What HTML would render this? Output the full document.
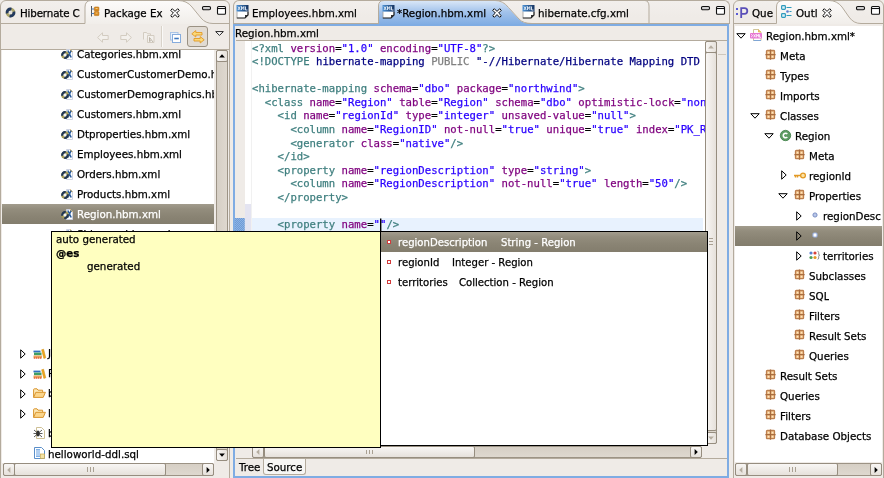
<!DOCTYPE html>
<html><head><meta charset="utf-8"><title>Eclipse</title>
<style>
html,body{margin:0;padding:0}
body{width:884px;height:478px;overflow:hidden;background:#EFEBE7;position:relative;
 font-family:"DejaVu Sans","Liberation Sans",sans-serif;font-size:10.3px;color:#000;}
.abs{position:absolute}
.ui,.code{will-change:transform;-webkit-text-stroke:.25px}
.ui{position:absolute;white-space:nowrap;line-height:14px;height:14px}
.code{position:absolute;white-space:pre;font-family:"DejaVu Sans Mono","Liberation Mono",monospace;font-size:10.63px;line-height:14px;height:14px;left:4.200px}
.t{color:#3F7F7F}.a{color:#7F007F}.v{color:#2A00FF}.k{color:#000080}.g{color:#808080}.n{color:#000080}
svg{position:absolute;overflow:visible}
.btn{position:absolute;box-sizing:border-box;border:1px solid #968D7F;border-radius:2px;background:linear-gradient(#F8F6F4,#E6E1DB)}
.vbtn{position:absolute;box-sizing:border-box;border:1px solid #968D7F;border-radius:2px;background:linear-gradient(90deg,#F8F6F4,#E6E1DB)}
.trough{position:absolute;box-sizing:border-box;border:1px solid #9C9385;background:linear-gradient(90deg,#D6CFC5,#DED8CF);border-radius:2px}
</style></head>
<body>
<div class="abs" style="left:0px;top:0px;width:230px;height:482px;border:1px solid #B4AB9D;border-radius:6px 6px 0 0;box-sizing:border-box;background:linear-gradient(#F2EFEC,#EFEBE7 16px)"></div>
<svg style="left:0px;top:0px" width="230" height="24" viewBox="0 0 230 24"><defs><linearGradient id="at" x1="0" y1="0" x2="0" y2="1"><stop offset="0" stop-color="#FCFBFA"/><stop offset="1" stop-color="#F1EEEA"/></linearGradient></defs><path d="M85 24V7Q85 .5 91.500 .5H178Q187 .5 192 7L201 18Q205.500 23.500 213 23.500H229V24z" fill="url(#at)"/><path d="M85 23.500V7Q85 .5 91.500 .5H178Q187 .5 192 7L201 18Q205.500 23.500 213 23.500H229" fill="none" stroke="#B4AB9D"/><path d="M1 23.500H85" stroke="#B4AB9D"/></svg>
<svg style="left:5px;top:7px" width="11" height="11" viewBox="0 0 11 11"><circle cx="5.500" cy="5.500" r="3.500" fill="#E4E2DC" stroke="#A9A368" stroke-width="2.600"/><path d="M2.12 6.41A3.5 3.5 0 0 1 6.41 2.12M8.88 4.59A3.5 3.5 0 0 1 4.59 8.88" fill="none" stroke="#22395F" stroke-width="2.800"/></svg>
<div class="ui" style="left:20px;top:6px;letter-spacing:-.15px">Hibernate C</div>
<svg style="left:91px;top:6px" width="10" height="11" viewBox="0 0 10 11"><path d="M.5 0v10.500" stroke="#555" stroke-width="1"/><path d="M.5 3h3M.5 7.500h3" stroke="#4A7CC0" stroke-width="1"/><rect x="3.300" y="1" width="4.600" height="4" rx=".7" fill="#D98A1E" stroke="#B86E10" stroke-width=".6"/><rect x="3.300" y="5.600" width="4.600" height="4" rx=".7" fill="#D98A1E" stroke="#B86E10" stroke-width=".6"/><path d="M4.600 2.500h2M4.600 7.100h2" stroke="#F3C77C" stroke-width="1"/></svg>
<div class="ui" style="left:104px;top:6px;">Package Ex</div>
<svg style="left:170px;top:8px" width="10" height="10" viewBox="0 0 10 10"><path d="M.7 2.300L2.300 .7 5 3.400 7.700 .7 9.300 2.300 6.600 5 9.300 7.700 7.700 9.300 5 6.600 2.300 9.300 .7 7.700 3.400 5z" fill="#fff" stroke="#000" stroke-width=".95" stroke-linejoin="miter"/></svg>
<svg style="left:202px;top:6px" width="9" height="4" viewBox="0 0 9 4"><rect x=".5" y=".5" width="8" height="3.200" rx="1.200" fill="#CFCFCF" stroke="#111" stroke-width="1.100"/></svg>
<svg style="left:217px;top:6px" width="9" height="9" viewBox="0 0 9 9"><rect x=".5" y=".5" width="8" height="7.800" rx="1" fill="#fff" stroke="#111" stroke-width="1.100"/><path d="M.5 2.500h8" stroke="#111" stroke-width="1.100"/></svg>
<svg style="left:97px;top:32px" width="12" height="11" viewBox="0 0 12 11"><path d="M.6 5.500L5.500 .8V3.500H11.200V7.500H5.500V10.200z" fill="#F3F0EC" stroke="#D3CCC1" stroke-width="1" stroke-linejoin="round"/></svg>
<svg style="left:120px;top:32px" width="12" height="11" viewBox="0 0 12 11"><path transform="translate(12 0) scale(-1 1)" d="M.6 5.500L5.500 .8V3.500H11.200V7.500H5.500V10.200z" fill="#F3F0EC" stroke="#D3CCC1" stroke-width="1" stroke-linejoin="round"/></svg>
<svg style="left:143px;top:31px" width="12" height="12" viewBox="0 0 12 12"><path d="M.5 8.500V1.500h3l1 1.300h3v2" fill="#F3F0EC" stroke="#D3CCC1"/><path d="M4.500 4.500h6.500v7H4.500z" fill="#F3F0EC" stroke="#D3CCC1"/><path d="M6.500 6.500l3.500 4.500M6.500 6.500v4l1.500-1" fill="none" stroke="#BDB5A9" stroke-width="1"/></svg>
<div class="abs" style="left:160.5px;top:26px;width:1px;height:21px;background:#D9D3CA"></div>
<div class="abs" style="left:161.5px;top:26px;width:1px;height:21px;background:#FAF9F7"></div>
<svg style="left:170px;top:32px" width="11" height="11" viewBox="0 0 11 11"><rect x=".5" y=".5" width="7.500" height="7.500" fill="#E8F0FA" stroke="#A9C4E6"/><rect x="2.500" y="2.500" width="8" height="8" fill="#fff" stroke="#86ACDD"/><path d="M4.300 6.500h4.500" stroke="#3E78C0" stroke-width="1.600"/></svg>
<div class="abs" style="left:187px;top:26px;width:21px;height:21px;box-sizing:border-box;border:1px solid #9A9183;border-radius:3px;background:#E1DBD3"></div>
<svg style="left:191px;top:30px" width="14" height="14" viewBox="0 0 14 14"><path d="M.8 3.800L4.800 .6V2.500H11V5H4.800V7z" fill="#FBD978" stroke="#E39A25" stroke-width=".9" stroke-linejoin="round"/><path d="M13.200 9.800L9.200 6.600V8.500H3V11H9.200V13z" fill="#FBD978" stroke="#E39A25" stroke-width=".9" stroke-linejoin="round"/></svg>
<svg style="left:215px;top:31px" width="9" height="5" viewBox="0 0 9 5"><path d="M.7 .6H8.300L4.500 4.400z" fill="#fff" stroke="#222" stroke-width="1" stroke-linejoin="round"/></svg>
<div class="abs" style="left:1px;top:48.5px;width:228px;height:1px;background:#B4AB9D"></div>
<div class="abs" style="left:2px;top:49.5px;width:212px;height:413px;background:#fff"></div>
<div class="ui" style="left:77px;top:47px;max-width:137px;overflow:hidden">Categories.hbm.xml</div>
<svg style="left:61px;top:49px" width="12" height="11" viewBox="0 0 12 11"><path d="M5.500 .5h4l2 2v8h-6z" fill="#fff" stroke="#C9CFE0" stroke-width=".9"/><path d="M9.500 .5v2h2" fill="#F6D27A" stroke="#E0A93B" stroke-width=".8"/><path d="M6.800 1.500l3.400 7M10.200 1.500l-3.400 7" stroke="#2C5E9E" stroke-width="1.600"/><circle cx="4" cy="6" r="2.800" fill="#F4F3EF" stroke="#A39A55" stroke-width="2"/><path d="M1.30 6.72A2.8 2.8 0 0 1 4.72 3.30M6.70 5.28A2.8 2.8 0 0 1 3.28 8.70" fill="none" stroke="#1F3557" stroke-width="2.200"/></svg>
<div class="ui" style="left:77px;top:67px;max-width:137px;overflow:hidden">CustomerCustomerDemo.hbm.xml</div>
<svg style="left:61px;top:69px" width="12" height="11" viewBox="0 0 12 11"><path d="M5.500 .5h4l2 2v8h-6z" fill="#fff" stroke="#C9CFE0" stroke-width=".9"/><path d="M9.500 .5v2h2" fill="#F6D27A" stroke="#E0A93B" stroke-width=".8"/><path d="M6.800 1.500l3.400 7M10.200 1.500l-3.400 7" stroke="#2C5E9E" stroke-width="1.600"/><circle cx="4" cy="6" r="2.800" fill="#F4F3EF" stroke="#A39A55" stroke-width="2"/><path d="M1.30 6.72A2.8 2.8 0 0 1 4.72 3.30M6.70 5.28A2.8 2.8 0 0 1 3.28 8.70" fill="none" stroke="#1F3557" stroke-width="2.200"/></svg>
<div class="ui" style="left:77px;top:87px;max-width:137px;overflow:hidden">CustomerDemographics.hbm.xml</div>
<svg style="left:61px;top:89px" width="12" height="11" viewBox="0 0 12 11"><path d="M5.500 .5h4l2 2v8h-6z" fill="#fff" stroke="#C9CFE0" stroke-width=".9"/><path d="M9.500 .5v2h2" fill="#F6D27A" stroke="#E0A93B" stroke-width=".8"/><path d="M6.800 1.500l3.400 7M10.200 1.500l-3.400 7" stroke="#2C5E9E" stroke-width="1.600"/><circle cx="4" cy="6" r="2.800" fill="#F4F3EF" stroke="#A39A55" stroke-width="2"/><path d="M1.30 6.72A2.8 2.8 0 0 1 4.72 3.30M6.70 5.28A2.8 2.8 0 0 1 3.28 8.70" fill="none" stroke="#1F3557" stroke-width="2.200"/></svg>
<div class="ui" style="left:77px;top:107px;max-width:137px;overflow:hidden">Customers.hbm.xml</div>
<svg style="left:61px;top:109px" width="12" height="11" viewBox="0 0 12 11"><path d="M5.500 .5h4l2 2v8h-6z" fill="#fff" stroke="#C9CFE0" stroke-width=".9"/><path d="M9.500 .5v2h2" fill="#F6D27A" stroke="#E0A93B" stroke-width=".8"/><path d="M6.800 1.500l3.400 7M10.200 1.500l-3.400 7" stroke="#2C5E9E" stroke-width="1.600"/><circle cx="4" cy="6" r="2.800" fill="#F4F3EF" stroke="#A39A55" stroke-width="2"/><path d="M1.30 6.72A2.8 2.8 0 0 1 4.72 3.30M6.70 5.28A2.8 2.8 0 0 1 3.28 8.70" fill="none" stroke="#1F3557" stroke-width="2.200"/></svg>
<div class="ui" style="left:77px;top:127px;max-width:137px;overflow:hidden">Dtproperties.hbm.xml</div>
<svg style="left:61px;top:129px" width="12" height="11" viewBox="0 0 12 11"><path d="M5.500 .5h4l2 2v8h-6z" fill="#fff" stroke="#C9CFE0" stroke-width=".9"/><path d="M9.500 .5v2h2" fill="#F6D27A" stroke="#E0A93B" stroke-width=".8"/><path d="M6.800 1.500l3.400 7M10.200 1.500l-3.400 7" stroke="#2C5E9E" stroke-width="1.600"/><circle cx="4" cy="6" r="2.800" fill="#F4F3EF" stroke="#A39A55" stroke-width="2"/><path d="M1.30 6.72A2.8 2.8 0 0 1 4.72 3.30M6.70 5.28A2.8 2.8 0 0 1 3.28 8.70" fill="none" stroke="#1F3557" stroke-width="2.200"/></svg>
<div class="ui" style="left:77px;top:147px;max-width:137px;overflow:hidden">Employees.hbm.xml</div>
<svg style="left:61px;top:149px" width="12" height="11" viewBox="0 0 12 11"><path d="M5.500 .5h4l2 2v8h-6z" fill="#fff" stroke="#C9CFE0" stroke-width=".9"/><path d="M9.500 .5v2h2" fill="#F6D27A" stroke="#E0A93B" stroke-width=".8"/><path d="M6.800 1.500l3.400 7M10.200 1.500l-3.400 7" stroke="#2C5E9E" stroke-width="1.600"/><circle cx="4" cy="6" r="2.800" fill="#F4F3EF" stroke="#A39A55" stroke-width="2"/><path d="M1.30 6.72A2.8 2.8 0 0 1 4.72 3.30M6.70 5.28A2.8 2.8 0 0 1 3.28 8.70" fill="none" stroke="#1F3557" stroke-width="2.200"/></svg>
<div class="ui" style="left:77px;top:167px;max-width:137px;overflow:hidden">Orders.hbm.xml</div>
<svg style="left:61px;top:169px" width="12" height="11" viewBox="0 0 12 11"><path d="M5.500 .5h4l2 2v8h-6z" fill="#fff" stroke="#C9CFE0" stroke-width=".9"/><path d="M9.500 .5v2h2" fill="#F6D27A" stroke="#E0A93B" stroke-width=".8"/><path d="M6.800 1.500l3.400 7M10.200 1.500l-3.400 7" stroke="#2C5E9E" stroke-width="1.600"/><circle cx="4" cy="6" r="2.800" fill="#F4F3EF" stroke="#A39A55" stroke-width="2"/><path d="M1.30 6.72A2.8 2.8 0 0 1 4.72 3.30M6.70 5.28A2.8 2.8 0 0 1 3.28 8.70" fill="none" stroke="#1F3557" stroke-width="2.200"/></svg>
<div class="ui" style="left:77px;top:187px;max-width:137px;overflow:hidden">Products.hbm.xml</div>
<svg style="left:61px;top:189px" width="12" height="11" viewBox="0 0 12 11"><path d="M5.500 .5h4l2 2v8h-6z" fill="#fff" stroke="#C9CFE0" stroke-width=".9"/><path d="M9.500 .5v2h2" fill="#F6D27A" stroke="#E0A93B" stroke-width=".8"/><path d="M6.800 1.500l3.400 7M10.200 1.500l-3.400 7" stroke="#2C5E9E" stroke-width="1.600"/><circle cx="4" cy="6" r="2.800" fill="#F4F3EF" stroke="#A39A55" stroke-width="2"/><path d="M1.30 6.72A2.8 2.8 0 0 1 4.72 3.30M6.70 5.28A2.8 2.8 0 0 1 3.28 8.70" fill="none" stroke="#1F3557" stroke-width="2.200"/></svg>
<div class="abs" style="left:2px;top:204px;width:212px;height:20px;background:linear-gradient(#A29C8D,#938D7D 25%,#8A8474 60%,#837D6D)"></div>
<div class="ui" style="left:77px;top:207px;color:#fff">Region.hbm.xml</div>
<svg style="left:61px;top:209px" width="12" height="11" viewBox="0 0 12 11"><path d="M5.500 .5h4l2 2v8h-6z" fill="#fff" stroke="#C9CFE0" stroke-width=".9"/><path d="M9.500 .5v2h2" fill="#F6D27A" stroke="#E0A93B" stroke-width=".8"/><path d="M6.800 1.500l3.400 7M10.200 1.500l-3.400 7" stroke="#2C5E9E" stroke-width="1.600"/><circle cx="4" cy="6" r="2.800" fill="#F4F3EF" stroke="#A39A55" stroke-width="2"/><path d="M1.30 6.72A2.8 2.8 0 0 1 4.72 3.30M6.70 5.28A2.8 2.8 0 0 1 3.28 8.70" fill="none" stroke="#1F3557" stroke-width="2.200"/></svg>
<svg style="left:61px;top:229px" width="12" height="11" viewBox="0 0 12 11"><path d="M5.500 .5h4l2 2v8h-6z" fill="#fff" stroke="#C9CFE0" stroke-width=".9"/><path d="M9.500 .5v2h2" fill="#F6D27A" stroke="#E0A93B" stroke-width=".8"/><path d="M6.800 1.500l3.400 7M10.200 1.500l-3.400 7" stroke="#2C5E9E" stroke-width="1.600"/><circle cx="4" cy="6" r="2.800" fill="#F4F3EF" stroke="#A39A55" stroke-width="2"/><path d="M1.30 6.72A2.8 2.8 0 0 1 4.72 3.30M6.70 5.28A2.8 2.8 0 0 1 3.28 8.70" fill="none" stroke="#1F3557" stroke-width="2.200"/></svg>
<div class="ui" style="left:77px;top:227px;">Shippers.hbm.xml</div>
<svg style="left:20px;top:348.5px" width="6" height="10" viewBox="0 0 6 10"><path d="M.7 .8L5.200 5 .7 9.200z" fill="#fff" stroke="#000" stroke-width="1" stroke-linejoin="round"/></svg>
<svg style="left:20px;top:368.5px" width="6" height="10" viewBox="0 0 6 10"><path d="M.7 .8L5.200 5 .7 9.200z" fill="#fff" stroke="#000" stroke-width="1" stroke-linejoin="round"/></svg>
<svg style="left:20px;top:388.5px" width="6" height="10" viewBox="0 0 6 10"><path d="M.7 .8L5.200 5 .7 9.200z" fill="#fff" stroke="#000" stroke-width="1" stroke-linejoin="round"/></svg>
<svg style="left:20px;top:408.5px" width="6" height="10" viewBox="0 0 6 10"><path d="M.7 .8L5.200 5 .7 9.200z" fill="#fff" stroke="#000" stroke-width="1" stroke-linejoin="round"/></svg>
<svg style="left:33px;top:349px" width="13" height="10" viewBox="0 0 13 10"><rect x=".5" y="1.600" width="7" height="1.800" fill="#2F6FC2"/><rect x="1" y="3.600" width="7.500" height="2.600" fill="#3F9E63"/><rect x=".5" y="6.500" width="8.500" height="3" fill="#E9A25B"/><path d="M1 9h7.500" stroke="#D33" stroke-width="1" stroke-dasharray="1 1"/><path d="M8.600 .8l2-.6 2.200 8.600-2 .6z" fill="#EDA61E" stroke="#D18E10" stroke-width=".5"/></svg>
<svg style="left:33px;top:369px" width="13" height="10" viewBox="0 0 13 10"><rect x=".5" y="1.600" width="7" height="1.800" fill="#2F6FC2"/><rect x="1" y="3.600" width="7.500" height="2.600" fill="#3F9E63"/><rect x=".5" y="6.500" width="8.500" height="3" fill="#E9A25B"/><path d="M1 9h7.500" stroke="#D33" stroke-width="1" stroke-dasharray="1 1"/><path d="M8.600 .8l2-.6 2.200 8.600-2 .6z" fill="#EDA61E" stroke="#D18E10" stroke-width=".5"/></svg>
<svg style="left:33px;top:388px" width="13" height="10" viewBox="0 0 13 10"><path d="M.6 9.400V1.600Q.6 .8 1.400 .8H4l1 1.400h4.600v2" fill="#FCE9B8" stroke="#D9942E" stroke-width="1"/><path d="M.6 9.400L2.800 4.300h9.600L10.200 9.400z" fill="#FBD58A" stroke="#D9942E" stroke-width="1" stroke-linejoin="round"/></svg>
<svg style="left:33px;top:408px" width="13" height="10" viewBox="0 0 13 10"><path d="M.6 9.400V1.600Q.6 .8 1.400 .8H4l1 1.400h4.600v2" fill="#FCE9B8" stroke="#D9942E" stroke-width="1"/><path d="M.6 9.400L2.800 4.300h9.600L10.200 9.400z" fill="#FBD58A" stroke="#D9942E" stroke-width="1" stroke-linejoin="round"/></svg>
<svg style="left:33px;top:427px" width="12" height="12" viewBox="0 0 12 12"><path d="M3.500 .5h5l3 3v8h-8z" fill="#fff" stroke="#C8B98A" stroke-width=".9"/><ellipse cx="5" cy="6.500" rx="1.600" ry="3" fill="#333"/><path d="M1 3l8 7M9 3L1 10M.5 6.500h9" stroke="#333" stroke-width=".8"/></svg>
<svg style="left:34px;top:447px" width="11" height="12" viewBox="0 0 11 12"><path d="M.5 .5h7l3 3v8h-10z" fill="#fff" stroke="#5B8FC9" stroke-width="1"/><rect x="2" y="2" width="4" height="8" fill="#7FB0E6"/><path d="M2 4h4M2 6h4M2 8h4" stroke="#fff" stroke-width=".8"/><rect x="6.500" y="7" width="4" height="4.500" fill="#F4E3A3" stroke="#C8A64B" stroke-width=".7"/></svg>
<div class="ui" style="left:48px;top:346px;">J</div>
<div class="ui" style="left:48px;top:366px;">R</div>
<div class="ui" style="left:48px;top:386px;">b</div>
<div class="ui" style="left:48px;top:406px;">l</div>
<div class="ui" style="left:48px;top:426px;">b</div>
<div class="ui" style="left:48px;top:447px;">helloworld-ddl.sql</div>
<div class="trough" style="left:216px;top:50px;width:12px;height:411px"></div>
<div class="vbtn" style="left:216px;top:50px;width:12px;height:12px"></div>
<div class="vbtn" style="left:216px;top:449px;width:12px;height:12px"></div>
<svg style="left:222.0px;top:56px" width="1" height="1"><path d="M0 -1.800L-2.900 1.400H2.900z" fill="#000"/></svg>
<svg style="left:222.0px;top:455px" width="1" height="1"><path d="M0 1.800L-2.900 -1.400H2.900z" fill="#000"/></svg>
<div class="trough" style="left:3px;top:463px;width:211px;height:13px;background:linear-gradient(#D6CFC5,#DED8CF)"></div>
<div class="btn" style="left:3px;top:463px;width:12px;height:13px"></div>
<div class="btn" style="left:202px;top:463px;width:12px;height:13px"></div>
<div class="btn" style="left:14px;top:463px;width:152px;height:13px"></div>
<svg style="left:9px;top:469.5px" width="1" height="1"><path d="M-1.800 0L1.400 -2.900V2.900z" fill="#B5ADA0"/></svg>
<svg style="left:208px;top:469.5px" width="1" height="1"><path d="M1.800 0L-1.400 -2.900V2.900z" fill="#000"/></svg>
<svg style="left:87px;top:467px" width="7" height="5" viewBox="0 0 7 5"><path d="M.5 0v5M3.500 0v5M6.500 0v5" stroke="#A9A092" stroke-width="1"/></svg>
<div class="abs" style="left:233px;top:0px;width:497px;height:24px;border:1px solid #B4AB9D;border-bottom:none;border-radius:6px 6px 0 0;box-sizing:border-box;background:linear-gradient(#F2EFEC,#EFEBE7 16px)"></div>
<div class="abs" style="left:234px;top:23px;width:496px;height:1px;background:#B4AB9D"></div>
<svg style="left:233px;top:0px" width="498" height="26" viewBox="0 0 498 26"><defs><linearGradient id="tg" x1="0" y1="0" x2="0" y2="1"><stop offset="0" stop-color="#D8E6F7"/><stop offset=".45" stop-color="#A3C3EB"/><stop offset="1" stop-color="#7FACE3"/></linearGradient></defs><path d="M146 25V6Q146 1 151 1H262Q270 1 275 7.500L285.500 19Q290 24 299 24L299 25z" fill="url(#tg)"/><path d="M145.500 23.500V6Q145.500 .5 151 .5H262Q270 .5 275.500 7.500L286 19Q290 23.500 299 23.500" fill="none" stroke="#B4AB9D"/><path d="M412 .5Q416 1 416 6V23" fill="none" stroke="#B4AB9D"/></svg>
<div class="abs" style="left:233.4px;top:24px;width:1.8px;height:453.6px;background:#7FACE3"></div>
<div class="abs" style="left:727.2px;top:24px;width:2px;height:453.6px;background:#7FACE3"></div>
<div class="abs" style="left:233.4px;top:24px;width:495.8px;height:1.8px;background:#7FACE3"></div>
<div class="abs" style="left:233.4px;top:476.2px;width:495.8px;height:1.4px;background:#7FACE3"></div>
<svg style="left:236px;top:5px" width="13" height="14" viewBox="0 0 13 14"><defs><linearGradient id="xg236" x1="0" y1="0" x2="1" y2="0"><stop offset="0" stop-color="#4D93D6"/><stop offset="1" stop-color="#16335F"/></linearGradient></defs><path d="M1 6.500h11v3.500l-3 3h-8z" fill="#fff"/><path d="M1 6.500v6.300" stroke="#9A9A9A" stroke-width=".8"/><path d="M.8 13h8.200l3-3V6.500" fill="none" stroke="#111" stroke-width="1.200"/><path d="M9 13v-3h3z" fill="#333"/><rect x=".5" y="0" width="12" height="6.500" fill="url(#xg236)"/><path d="M2 1.500l2.200 3.500M4.200 1.500L2 5M5.500 5V1.500l1.200 2 1.200-2V5M9.500 1.500V5h2" stroke="#E6EEF8" stroke-width=".9" fill="none"/></svg>
<div class="ui" style="left:252px;top:6px;">Employees.hbm.xml</div>
<svg style="left:382px;top:5px" width="13" height="14" viewBox="0 0 13 14"><defs><linearGradient id="xg382" x1="0" y1="0" x2="1" y2="0"><stop offset="0" stop-color="#4D93D6"/><stop offset="1" stop-color="#16335F"/></linearGradient></defs><path d="M1 6.500h11v3.500l-3 3h-8z" fill="#fff"/><path d="M1 6.500v6.300" stroke="#9A9A9A" stroke-width=".8"/><path d="M.8 13h8.200l3-3V6.500" fill="none" stroke="#111" stroke-width="1.200"/><path d="M9 13v-3h3z" fill="#333"/><rect x=".5" y="0" width="12" height="6.500" fill="url(#xg382)"/><path d="M2 1.500l2.200 3.500M4.200 1.500L2 5M5.500 5V1.500l1.200 2 1.200-2V5M9.500 1.500V5h2" stroke="#E6EEF8" stroke-width=".9" fill="none"/></svg>
<div class="ui" style="left:397px;top:6px;">*Region.hbm.xml</div>
<svg style="left:492px;top:8px" width="10" height="10" viewBox="0 0 10 10"><path d="M.7 2.300L2.300 .7 5 3.400 7.700 .7 9.300 2.300 6.600 5 9.300 7.700 7.700 9.300 5 6.600 2.300 9.300 .7 7.700 3.400 5z" fill="#fff" stroke="#000" stroke-width=".95" stroke-linejoin="miter"/></svg>
<svg style="left:522px;top:5px" width="13" height="14" viewBox="0 0 13 14"><defs><linearGradient id="xg522" x1="0" y1="0" x2="1" y2="0"><stop offset="0" stop-color="#4D93D6"/><stop offset="1" stop-color="#16335F"/></linearGradient></defs><path d="M1 6.500h11v3.500l-3 3h-8z" fill="#fff"/><path d="M1 6.500v6.300" stroke="#9A9A9A" stroke-width=".8"/><path d="M.8 13h8.200l3-3V6.500" fill="none" stroke="#111" stroke-width="1.200"/><path d="M9 13v-3h3z" fill="#333"/><rect x=".5" y="0" width="12" height="6.500" fill="url(#xg522)"/><path d="M2 1.500l2.200 3.500M4.200 1.500L2 5M5.500 5V1.500l1.200 2 1.200-2V5M9.500 1.500V5h2" stroke="#E6EEF8" stroke-width=".9" fill="none"/></svg>
<div class="ui" style="left:538px;top:6px;">hibernate.cfg.xml</div>
<svg style="left:701px;top:6px" width="9" height="4" viewBox="0 0 9 4"><rect x=".5" y=".5" width="8" height="3.200" rx="1.200" fill="#CFCFCF" stroke="#111" stroke-width="1.100"/></svg>
<svg style="left:716px;top:6px" width="9" height="9" viewBox="0 0 9 9"><rect x=".5" y=".5" width="8" height="7.800" rx="1" fill="#fff" stroke="#111" stroke-width="1.100"/><path d="M.5 2.500h8" stroke="#111" stroke-width="1.100"/></svg>
<div class="ui" style="left:234.5px;top:25.5px;">Region.hbm.xml</div>
<div class="abs" style="left:236px;top:40px;width:491px;height:1px;background:#B4AB9D"></div>
<div class="abs" style="left:245px;top:41px;width:460px;height:405px;background:#fff"></div>
<div class="abs" style="left:245px;top:204px;width:6px;height:27px;background:#E4E4F1"></div>
<div class="abs" style="left:251px;top:41px;width:1px;height:405px;background:#F1F1F1"></div>
<svg style="left:235.2px;top:218px" width="9.8" height="13" viewBox="0 0 9.8 13"><defs><pattern id="dz" width="2" height="2" patternUnits="userSpaceOnUse"><rect width="2" height="2" fill="#8DB3E4"/><rect width="1" height="1" fill="#6F9BD6"/><rect x="1" y="1" width="1" height="1" fill="#6F9BD6"/></pattern></defs><rect width="9.800" height="13" fill="url(#dz)"/></svg>
<div class="abs" style="left:248px;top:41px;width:457px;height:405px;overflow:hidden">
<div class="abs" style="left:4px;top:176.84px;width:450.500px;height:13.500px;background:#E8F2FE"></div>
<div class="code" style="top:0.50px"><span class="t">&lt;?xml</span> <span class="a">version</span>=<span class="v">"1.0"</span> <span class="a">encoding</span>=<span class="v">"UTF-8"</span><span class="t">?&gt;</span></div>
<div class="code" style="top:14.08px"><span class="t">&lt;!DOCTYPE</span> <span class="k">hibernate-mapping</span> <span class="g">PUBLIC</span> <span class="n">"-//Hibernate/Hibernate Mapping DTD </span></div>
<div class="code" style="top:41.24px"><span class="t">&lt;hibernate-mapping</span> <span class="a">schema</span>=<span class="v">"dbo"</span> <span class="a">package</span>=<span class="v">"northwind"</span><span class="t">&gt;</span></div>
<div class="code" style="top:54.82px">  <span class="t">&lt;class</span> <span class="a">name</span>=<span class="v">"Region"</span> <span class="a">table</span>=<span class="v">"Region"</span> <span class="a">schema</span>=<span class="v">"dbo"</span> <span class="a">optimistic-lock</span>=<span class="v">"none"</span></div>
<div class="code" style="top:68.40px">    <span class="t">&lt;id</span> <span class="a">name</span>=<span class="v">"regionId"</span> <span class="a">type</span>=<span class="v">"integer"</span> <span class="a">unsaved-value</span>=<span class="v">"null"</span><span class="t">&gt;</span></div>
<div class="code" style="top:81.98px">      <span class="t">&lt;column</span> <span class="a">name</span>=<span class="v">"RegionID"</span> <span class="a">not-null</span>=<span class="v">"true"</span> <span class="a">unique</span>=<span class="v">"true"</span> <span class="a">index</span>=<span class="v">"PK_Region"</span></div>
<div class="code" style="top:95.56px">      <span class="t">&lt;generator</span> <span class="a">class</span>=<span class="v">"native"</span><span class="t">/&gt;</span></div>
<div class="code" style="top:109.14px">    <span class="t">&lt;/id&gt;</span></div>
<div class="code" style="top:122.72px">    <span class="t">&lt;property</span> <span class="a">name</span>=<span class="v">"regionDescription"</span> <span class="a">type</span>=<span class="v">"string"</span><span class="t">&gt;</span></div>
<div class="code" style="top:136.30px">      <span class="t">&lt;column</span> <span class="a">name</span>=<span class="v">"RegionDescription"</span> <span class="a">not-null</span>=<span class="v">"true"</span> <span class="a">length</span>=<span class="v">"50"</span><span class="t">/&gt;</span></div>
<div class="code" style="top:149.88px">    <span class="t">&lt;/property&gt;</span></div>
<div class="code" style="top:177.04px">    <span class="t">&lt;property</span> <span class="a">name</span>=<span class="v">""</span><span class="t">/&gt;</span></div>
</div>
<svg style="left:380px;top:218px" width="2" height="13" viewBox="0 0 2 13"><rect x="0" y=".5" width="1.400" height="12.500" fill="#000"/></svg>
<div class="trough" style="left:705px;top:41px;width:12px;height:403px"></div>
<div class="vbtn" style="left:705px;top:41px;width:12px;height:12px"></div>
<div class="vbtn" style="left:705px;top:432px;width:12px;height:12px"></div>
<svg style="left:711.0px;top:47px" width="1" height="1"><path d="M0 -1.800L-2.900 1.400H2.900z" fill="#B5ADA0"/></svg>
<svg style="left:711.0px;top:438px" width="1" height="1"><path d="M0 1.800L-2.900 -1.400H2.900z" fill="#B5ADA0"/></svg>
<div class="vbtn" style="left:705px;top:52px;width:12px;height:379px"></div>
<svg style="left:709px;top:238px" width="4" height="7" viewBox="0 0 4 7"><path d="M0 .5h4M0 3.500h4M0 6.500h4" stroke="#A9A092" stroke-width="1"/></svg>
<div class="abs" style="left:718px;top:54px;width:8px;height:1px;background:#CFC8BD"></div>
<div class="trough" style="left:252px;top:446px;width:450px;height:12px;background:linear-gradient(#D6CFC5,#DED8CF)"></div>
<div class="btn" style="left:252px;top:446px;width:12px;height:12px"></div>
<div class="btn" style="left:690px;top:446px;width:12px;height:12px"></div>
<div class="btn" style="left:264px;top:446px;width:211px;height:12px"></div>
<svg style="left:258px;top:452.0px" width="1" height="1"><path d="M-1.800 0L1.400 -2.900V2.900z" fill="#B5ADA0"/></svg>
<svg style="left:696px;top:452.0px" width="1" height="1"><path d="M1.800 0L-1.400 -2.900V2.900z" fill="#000"/></svg>
<svg style="left:366px;top:450px" width="7" height="4" viewBox="0 0 7 4"><path d="M.5 0v4M3.500 0v4M6.500 0v4" stroke="#A9A092" stroke-width="1"/></svg>
<div class="abs" style="left:236px;top:458px;width:491px;height:1px;background:#B4AB9D"></div>
<div class="abs" style="left:263px;top:459px;width:43px;height:16px;background:#F7F6F4;border:1px solid #B4AB9D;border-top:none;border-radius:0 0 3px 3px;box-sizing:border-box"></div>
<div class="ui" style="left:239px;top:459.5px;">Tree</div>
<div class="ui" style="left:266.5px;top:459.5px;">Source</div>
<div class="abs" style="left:732.5px;top:0px;width:151.5px;height:482px;border:1px solid #B4AB9D;border-radius:6px 6px 0 0;box-sizing:border-box;background:linear-gradient(#F2EFEC,#EFEBE7 16px)"></div>
<svg style="left:733px;top:0px" width="151" height="24" viewBox="0 0 151 24"><path d="M43.500 24V7Q43.500 .5 50 .5H96Q104 .5 109 7L116 17Q120.500 23.500 128 23.500H151V24z" fill="url(#at)"/><path d="M43.500 23.500V7Q43.500 .5 50 .5H96Q104 .5 109 7L116 17Q120.500 23.500 128 23.500H151" fill="none" stroke="#B4AB9D"/><path d="M1 23.500H43.500" stroke="#B4AB9D"/></svg>
<div class="abs" style="left:735px;top:26px;width:147px;height:436px;background:#fff"></div>
<svg style="left:736px;top:7px" width="12" height="11" viewBox="0 0 12 11"><rect x="0" y="1" width="2" height="2" fill="#5A5CD6"/><rect x="0" y="6" width="2" height="2" fill="#5A5CD6"/><path d="M5.200 11V1.200h3.300a2.700 2.700 0 0 1 0 5.600H5.200" fill="none" stroke="#5A4FB8" stroke-width="1.800"/></svg>
<div class="ui" style="left:752px;top:6px;">Que</div>
<svg style="left:781px;top:5px" width="11" height="13" viewBox="0 0 11 13"><rect x=".6" y=".6" width="3.800" height="3.800" rx=".8" fill="#DDF0F7" stroke="#2E9BBD" stroke-width="1.200"/><rect x=".6" y="8.600" width="3.800" height="3.800" rx=".8" fill="#DDF0F7" stroke="#2E9BBD" stroke-width="1.200"/><path d="M5.500 2.500h5M5.500 10.500h5M8.500 6.500h2" stroke="#2E9BBD" stroke-width="1.200"/><circle cx="6.500" cy="6.500" r="1.300" fill="#5B7FD0"/></svg>
<div class="ui" style="left:796px;top:6px;">Outl</div>
<svg style="left:822px;top:8px" width="10" height="10" viewBox="0 0 10 10"><path d="M.7 2.300L2.300 .7 5 3.400 7.700 .7 9.300 2.300 6.600 5 9.300 7.700 7.700 9.300 5 6.600 2.300 9.300 .7 7.700 3.400 5z" fill="#fff" stroke="#000" stroke-width=".95" stroke-linejoin="miter"/></svg>
<svg style="left:856px;top:6px" width="9" height="4" viewBox="0 0 9 4"><rect x=".5" y=".5" width="8" height="3.200" rx="1.200" fill="#CFCFCF" stroke="#111" stroke-width="1.100"/></svg>
<svg style="left:871px;top:6px" width="9" height="9" viewBox="0 0 9 9"><rect x=".5" y=".5" width="8" height="7.800" rx="1" fill="#fff" stroke="#111" stroke-width="1.100"/><path d="M.5 2.500h8" stroke="#111" stroke-width="1.100"/></svg>
<div class="ui" style="left:766px;top:28.700000000000003px;max-width:115px;overflow:hidden">Region.hbm.xml*</div>
<div class="ui" style="left:780px;top:48.7px;max-width:101px;overflow:hidden">Meta</div>
<svg style="left:765px;top:49px" width="11" height="11" viewBox="0 0 11 11"><rect x="1.500" y="1.500" width="8" height="8.200" rx=".8" fill="#F6C790" stroke="#BC7F4E" stroke-width="1.300"/><path d="M5.500 .5v10.200M.4 5.600h10.200" stroke="#A86C3E" stroke-width="1.300"/><path d="M3 3.600h1.200M6.900 3.600h1.200M3 7.600h1.200M6.900 7.600h1.200" stroke="#FDE7C4" stroke-width="1.400"/></svg>
<div class="ui" style="left:780px;top:68.7px;max-width:101px;overflow:hidden">Types</div>
<svg style="left:765px;top:69px" width="11" height="11" viewBox="0 0 11 11"><rect x="1.500" y="1.500" width="8" height="8.200" rx=".8" fill="#F6C790" stroke="#BC7F4E" stroke-width="1.300"/><path d="M5.500 .5v10.200M.4 5.600h10.200" stroke="#A86C3E" stroke-width="1.300"/><path d="M3 3.600h1.200M6.900 3.600h1.200M3 7.600h1.200M6.900 7.600h1.200" stroke="#FDE7C4" stroke-width="1.400"/></svg>
<div class="ui" style="left:780px;top:88.7px;max-width:101px;overflow:hidden">Imports</div>
<svg style="left:765px;top:89px" width="11" height="11" viewBox="0 0 11 11"><rect x="1.500" y="1.500" width="8" height="8.200" rx=".8" fill="#F6C790" stroke="#BC7F4E" stroke-width="1.300"/><path d="M5.500 .5v10.200M.4 5.600h10.200" stroke="#A86C3E" stroke-width="1.300"/><path d="M3 3.600h1.200M6.900 3.600h1.200M3 7.600h1.200M6.900 7.600h1.200" stroke="#FDE7C4" stroke-width="1.400"/></svg>
<div class="ui" style="left:780px;top:108.7px;max-width:101px;overflow:hidden">Classes</div>
<svg style="left:765px;top:109px" width="11" height="11" viewBox="0 0 11 11"><rect x="1.500" y="1.500" width="8" height="8.200" rx=".8" fill="#F6C790" stroke="#BC7F4E" stroke-width="1.300"/><path d="M5.500 .5v10.200M.4 5.600h10.200" stroke="#A86C3E" stroke-width="1.300"/><path d="M3 3.600h1.200M6.900 3.600h1.200M3 7.600h1.200M6.900 7.600h1.200" stroke="#FDE7C4" stroke-width="1.400"/></svg>
<div class="ui" style="left:795px;top:128.7px;max-width:86px;overflow:hidden">Region</div>
<div class="ui" style="left:809px;top:148.7px;max-width:72px;overflow:hidden">Meta</div>
<svg style="left:794px;top:149px" width="11" height="11" viewBox="0 0 11 11"><rect x="1.500" y="1.500" width="8" height="8.200" rx=".8" fill="#F6C790" stroke="#BC7F4E" stroke-width="1.300"/><path d="M5.500 .5v10.200M.4 5.600h10.200" stroke="#A86C3E" stroke-width="1.300"/><path d="M3 3.600h1.200M6.900 3.600h1.200M3 7.600h1.200M6.900 7.600h1.200" stroke="#FDE7C4" stroke-width="1.400"/></svg>
<div class="ui" style="left:809px;top:168.7px;max-width:72px;overflow:hidden">regionId</div>
<div class="ui" style="left:809px;top:188.7px;max-width:72px;overflow:hidden">Properties</div>
<svg style="left:794px;top:189px" width="11" height="11" viewBox="0 0 11 11"><rect x="1.500" y="1.500" width="8" height="8.200" rx=".8" fill="#F6C790" stroke="#BC7F4E" stroke-width="1.300"/><path d="M5.500 .5v10.200M.4 5.600h10.200" stroke="#A86C3E" stroke-width="1.300"/><path d="M3 3.600h1.200M6.900 3.600h1.200M3 7.600h1.200M6.900 7.600h1.200" stroke="#FDE7C4" stroke-width="1.400"/></svg>
<div class="ui" style="left:823px;top:208.7px;max-width:58px;overflow:hidden">regionDesc</div>
<div class="abs" style="left:735px;top:226px;width:147px;height:20px;background:linear-gradient(#A29C8D,#938D7D 25%,#8A8474 60%,#837D6D)"></div>
<div class="ui" style="left:823px;top:248.7px;max-width:58px;overflow:hidden">territories</div>
<div class="ui" style="left:809px;top:268.7px;max-width:72px;overflow:hidden">Subclasses</div>
<svg style="left:794px;top:269px" width="11" height="11" viewBox="0 0 11 11"><rect x="1.500" y="1.500" width="8" height="8.200" rx=".8" fill="#F6C790" stroke="#BC7F4E" stroke-width="1.300"/><path d="M5.500 .5v10.200M.4 5.600h10.200" stroke="#A86C3E" stroke-width="1.300"/><path d="M3 3.600h1.200M6.900 3.600h1.200M3 7.600h1.200M6.900 7.600h1.200" stroke="#FDE7C4" stroke-width="1.400"/></svg>
<div class="ui" style="left:809px;top:288.7px;max-width:72px;overflow:hidden">SQL</div>
<svg style="left:794px;top:289px" width="11" height="11" viewBox="0 0 11 11"><rect x="1.500" y="1.500" width="8" height="8.200" rx=".8" fill="#F6C790" stroke="#BC7F4E" stroke-width="1.300"/><path d="M5.500 .5v10.200M.4 5.600h10.200" stroke="#A86C3E" stroke-width="1.300"/><path d="M3 3.600h1.200M6.900 3.600h1.200M3 7.600h1.200M6.900 7.600h1.200" stroke="#FDE7C4" stroke-width="1.400"/></svg>
<div class="ui" style="left:809px;top:308.7px;max-width:72px;overflow:hidden">Filters</div>
<svg style="left:794px;top:309px" width="11" height="11" viewBox="0 0 11 11"><rect x="1.500" y="1.500" width="8" height="8.200" rx=".8" fill="#F6C790" stroke="#BC7F4E" stroke-width="1.300"/><path d="M5.500 .5v10.200M.4 5.600h10.200" stroke="#A86C3E" stroke-width="1.300"/><path d="M3 3.600h1.200M6.900 3.600h1.200M3 7.600h1.200M6.900 7.600h1.200" stroke="#FDE7C4" stroke-width="1.400"/></svg>
<div class="ui" style="left:809px;top:328.7px;max-width:72px;overflow:hidden">Result Sets</div>
<svg style="left:794px;top:329px" width="11" height="11" viewBox="0 0 11 11"><rect x="1.500" y="1.500" width="8" height="8.200" rx=".8" fill="#F6C790" stroke="#BC7F4E" stroke-width="1.300"/><path d="M5.500 .5v10.200M.4 5.600h10.200" stroke="#A86C3E" stroke-width="1.300"/><path d="M3 3.600h1.200M6.900 3.600h1.200M3 7.600h1.200M6.900 7.600h1.200" stroke="#FDE7C4" stroke-width="1.400"/></svg>
<div class="ui" style="left:809px;top:348.7px;max-width:72px;overflow:hidden">Queries</div>
<svg style="left:794px;top:349px" width="11" height="11" viewBox="0 0 11 11"><rect x="1.500" y="1.500" width="8" height="8.200" rx=".8" fill="#F6C790" stroke="#BC7F4E" stroke-width="1.300"/><path d="M5.500 .5v10.200M.4 5.600h10.200" stroke="#A86C3E" stroke-width="1.300"/><path d="M3 3.600h1.200M6.900 3.600h1.200M3 7.600h1.200M6.900 7.600h1.200" stroke="#FDE7C4" stroke-width="1.400"/></svg>
<div class="ui" style="left:780px;top:368.7px;max-width:101px;overflow:hidden">Result Sets</div>
<svg style="left:765px;top:369px" width="11" height="11" viewBox="0 0 11 11"><rect x="1.500" y="1.500" width="8" height="8.200" rx=".8" fill="#F6C790" stroke="#BC7F4E" stroke-width="1.300"/><path d="M5.500 .5v10.200M.4 5.600h10.200" stroke="#A86C3E" stroke-width="1.300"/><path d="M3 3.600h1.200M6.900 3.600h1.200M3 7.600h1.200M6.900 7.600h1.200" stroke="#FDE7C4" stroke-width="1.400"/></svg>
<div class="ui" style="left:780px;top:388.7px;max-width:101px;overflow:hidden">Queries</div>
<svg style="left:765px;top:389px" width="11" height="11" viewBox="0 0 11 11"><rect x="1.500" y="1.500" width="8" height="8.200" rx=".8" fill="#F6C790" stroke="#BC7F4E" stroke-width="1.300"/><path d="M5.500 .5v10.200M.4 5.600h10.200" stroke="#A86C3E" stroke-width="1.300"/><path d="M3 3.600h1.200M6.900 3.600h1.200M3 7.600h1.200M6.900 7.600h1.200" stroke="#FDE7C4" stroke-width="1.400"/></svg>
<div class="ui" style="left:780px;top:408.7px;max-width:101px;overflow:hidden">Filters</div>
<svg style="left:765px;top:409px" width="11" height="11" viewBox="0 0 11 11"><rect x="1.500" y="1.500" width="8" height="8.200" rx=".8" fill="#F6C790" stroke="#BC7F4E" stroke-width="1.300"/><path d="M5.500 .5v10.200M.4 5.600h10.200" stroke="#A86C3E" stroke-width="1.300"/><path d="M3 3.600h1.200M6.900 3.600h1.200M3 7.600h1.200M6.900 7.600h1.200" stroke="#FDE7C4" stroke-width="1.400"/></svg>
<div class="ui" style="left:780px;top:428.7px;max-width:101px;overflow:hidden">Database Objects</div>
<svg style="left:765px;top:429px" width="11" height="11" viewBox="0 0 11 11"><rect x="1.500" y="1.500" width="8" height="8.200" rx=".8" fill="#F6C790" stroke="#BC7F4E" stroke-width="1.300"/><path d="M5.500 .5v10.200M.4 5.600h10.200" stroke="#A86C3E" stroke-width="1.300"/><path d="M3 3.600h1.200M6.900 3.600h1.200M3 7.600h1.200M6.900 7.600h1.200" stroke="#FDE7C4" stroke-width="1.400"/></svg>
<svg style="left:750px;top:29px" width="12" height="12" viewBox="0 0 12 12"><path d="M3.500 .5h5l2.500 2.500v8.500h-7.500z" fill="#fff" stroke="#C9BE8E" stroke-width=".9"/><path d="M8.500 .5v2.500h2.500" fill="#F6D27A" stroke="#E0A93B" stroke-width=".7"/><rect x="0" y="4" width="12" height="5.500" rx="1" fill="#E777D3"/><path d="M1 5.200l1.600 1.500L1 8.200M3.600 5.300l2 3M5.600 5.300l-2 3M6.600 8.300v-3l1 1.500 1-1.500v3M9.600 5.300v3h1.500" stroke="#fff" stroke-width=".8" fill="none"/><path d="M3.500 11.500h7.500" stroke="#7FA6D6" stroke-width="1"/></svg>
<svg style="left:780px;top:130px" width="11" height="11" viewBox="0 0 11 11"><circle cx="5.500" cy="5.500" r="5.200" fill="#5E9B62" stroke="#3F7F47" stroke-width=".8"/><path d="M7.300 4A2.300 2.300 0 1 0 7.300 7" fill="none" stroke="#fff" stroke-width="1.500"/></svg>
<svg style="left:794px;top:172px" width="12" height="7" viewBox="0 0 12 7"><circle cx="9" cy="3.500" r="2.400" fill="#FBE3A6" stroke="#E39A25" stroke-width="1.300"/><path d="M0 3.500h7M1.500 3.500v2M3.500 3.500v2" stroke="#E39A25" stroke-width="1.400"/></svg>
<svg style="left:812px;top:212px" width="6" height="6" viewBox="0 0 6 6"><circle cx="3" cy="3" r="2.100" fill="#B9C7E8" stroke="#6F86BE" stroke-width=".9"/></svg>
<svg style="left:812px;top:232px" width="6" height="6" viewBox="0 0 6 6"><rect x="1" y="1" width="4" height="4" rx="1" fill="#fff" stroke="#9DB3E3" stroke-width="1.100"/></svg>
<svg style="left:809px;top:251px" width="11" height="9" viewBox="0 0 11 9"><circle cx="2" cy="2" r="1.600" fill="#5B7FD0"/><circle cx="6" cy="2" r="1.600" fill="#D8413A"/><circle cx="2" cy="6.500" r="1.600" fill="#4E9E55"/><circle cx="6" cy="6.500" r="1.600" fill="#E39A25"/><path d="M8.500 .3q1.200 0 1.200 1.300v1.600q0 1 1 1-1 0-1 1v1.800q0 1.300-1.200 1.300" fill="none" stroke="#888" stroke-width=".9"/></svg>
<svg style="left:736px;top:32.5px" width="10" height="6" viewBox="0 0 10 6"><path d="M.8 .7L5 5.200 9.200 .7z" fill="#fff" stroke="#000" stroke-width="1" stroke-linejoin="round"/></svg>
<svg style="left:750px;top:112.5px" width="10" height="6" viewBox="0 0 10 6"><path d="M.8 .7L5 5.200 9.200 .7z" fill="#fff" stroke="#000" stroke-width="1" stroke-linejoin="round"/></svg>
<svg style="left:764px;top:132.5px" width="10" height="6" viewBox="0 0 10 6"><path d="M.8 .7L5 5.200 9.200 .7z" fill="#fff" stroke="#000" stroke-width="1" stroke-linejoin="round"/></svg>
<svg style="left:778px;top:192.5px" width="10" height="6" viewBox="0 0 10 6"><path d="M.8 .7L5 5.200 9.200 .7z" fill="#fff" stroke="#000" stroke-width="1" stroke-linejoin="round"/></svg>
<svg style="left:781px;top:170px" width="6" height="10" viewBox="0 0 6 10"><path d="M.7 .8L5.200 5 .7 9.200z" fill="#fff" stroke="#000" stroke-width="1" stroke-linejoin="round"/></svg>
<svg style="left:796px;top:210.5px" width="6" height="10" viewBox="0 0 6 10"><path d="M.7 .8L5.200 5 .7 9.200z" fill="#fff" stroke="#000" stroke-width="1" stroke-linejoin="round"/></svg>
<svg style="left:796px;top:230.5px" width="6" height="10" viewBox="0 0 6 10"><path d="M.7 .8L5.200 5 .7 9.200z" fill="none" stroke="#000" stroke-width="1" stroke-linejoin="round"/></svg>
<svg style="left:796px;top:250.5px" width="6" height="10" viewBox="0 0 6 10"><path d="M.7 .8L5.200 5 .7 9.200z" fill="#fff" stroke="#000" stroke-width="1" stroke-linejoin="round"/></svg>
<div class="trough" style="left:735px;top:463px;width:147px;height:13px;background:linear-gradient(#D6CFC5,#DED8CF)"></div>
<div class="btn" style="left:735px;top:463px;width:12px;height:13px"></div>
<div class="btn" style="left:870px;top:463px;width:12px;height:13px"></div>
<div class="btn" style="left:747px;top:463px;width:91px;height:13px"></div>
<svg style="left:741px;top:469.5px" width="1" height="1"><path d="M-1.800 0L1.400 -2.900V2.900z" fill="#B5ADA0"/></svg>
<svg style="left:876px;top:469.5px" width="1" height="1"><path d="M1.800 0L-1.400 -2.900V2.900z" fill="#000"/></svg>
<svg style="left:789px;top:467px" width="7" height="5" viewBox="0 0 7 5"><path d="M.5 0v5M3.500 0v5M6.500 0v5" stroke="#A9A092" stroke-width="1"/></svg>
<div class="abs" style="left:51px;top:231px;width:330px;height:216.5px;background:#FFFFC0;border:1px solid #000;box-sizing:border-box"></div>
<div class="ui" style="left:56px;top:232px;">auto generated</div>
<div class="ui" style="left:56px;top:246px;"><b>@es</b></div>
<div class="ui" style="left:87px;top:259px;">generated</div>
<div class="abs" style="left:380px;top:231px;width:328px;height:215px;background:#fff;border:1px solid #000;box-sizing:border-box"></div>
<div class="abs" style="left:381px;top:232px;width:326px;height:20px;background:linear-gradient(#A29C8D,#938D7D 25%,#8A8474 60%,#837D6D)"></div>
<div class="ui" style="left:398px;top:236px;color:#fff;font-size:10.100px">regionDescription</div>
<div class="ui" style="left:500.5px;top:236px;color:#fff;font-size:10.100px">String - Region</div>
<div class="ui" style="left:398px;top:256px;font-size:10.100px">regionId</div>
<div class="ui" style="left:452px;top:256px;font-size:10.100px">Integer - Region</div>
<div class="ui" style="left:398px;top:276px;font-size:10.100px">territories</div>
<div class="ui" style="left:459px;top:276px;font-size:10.100px">Collection - Region</div>
<div class="abs" style="left:387px;top:240px;width:4px;height:4px;border:1px solid #D23B3B;box-sizing:border-box;background:#fff"></div>
<div class="abs" style="left:387px;top:260px;width:4px;height:4px;border:1px solid #D23B3B;box-sizing:border-box;background:#fff"></div>
<div class="abs" style="left:387px;top:280px;width:4px;height:4px;border:1px solid #D23B3B;box-sizing:border-box;background:#fff"></div>
</body></html>
